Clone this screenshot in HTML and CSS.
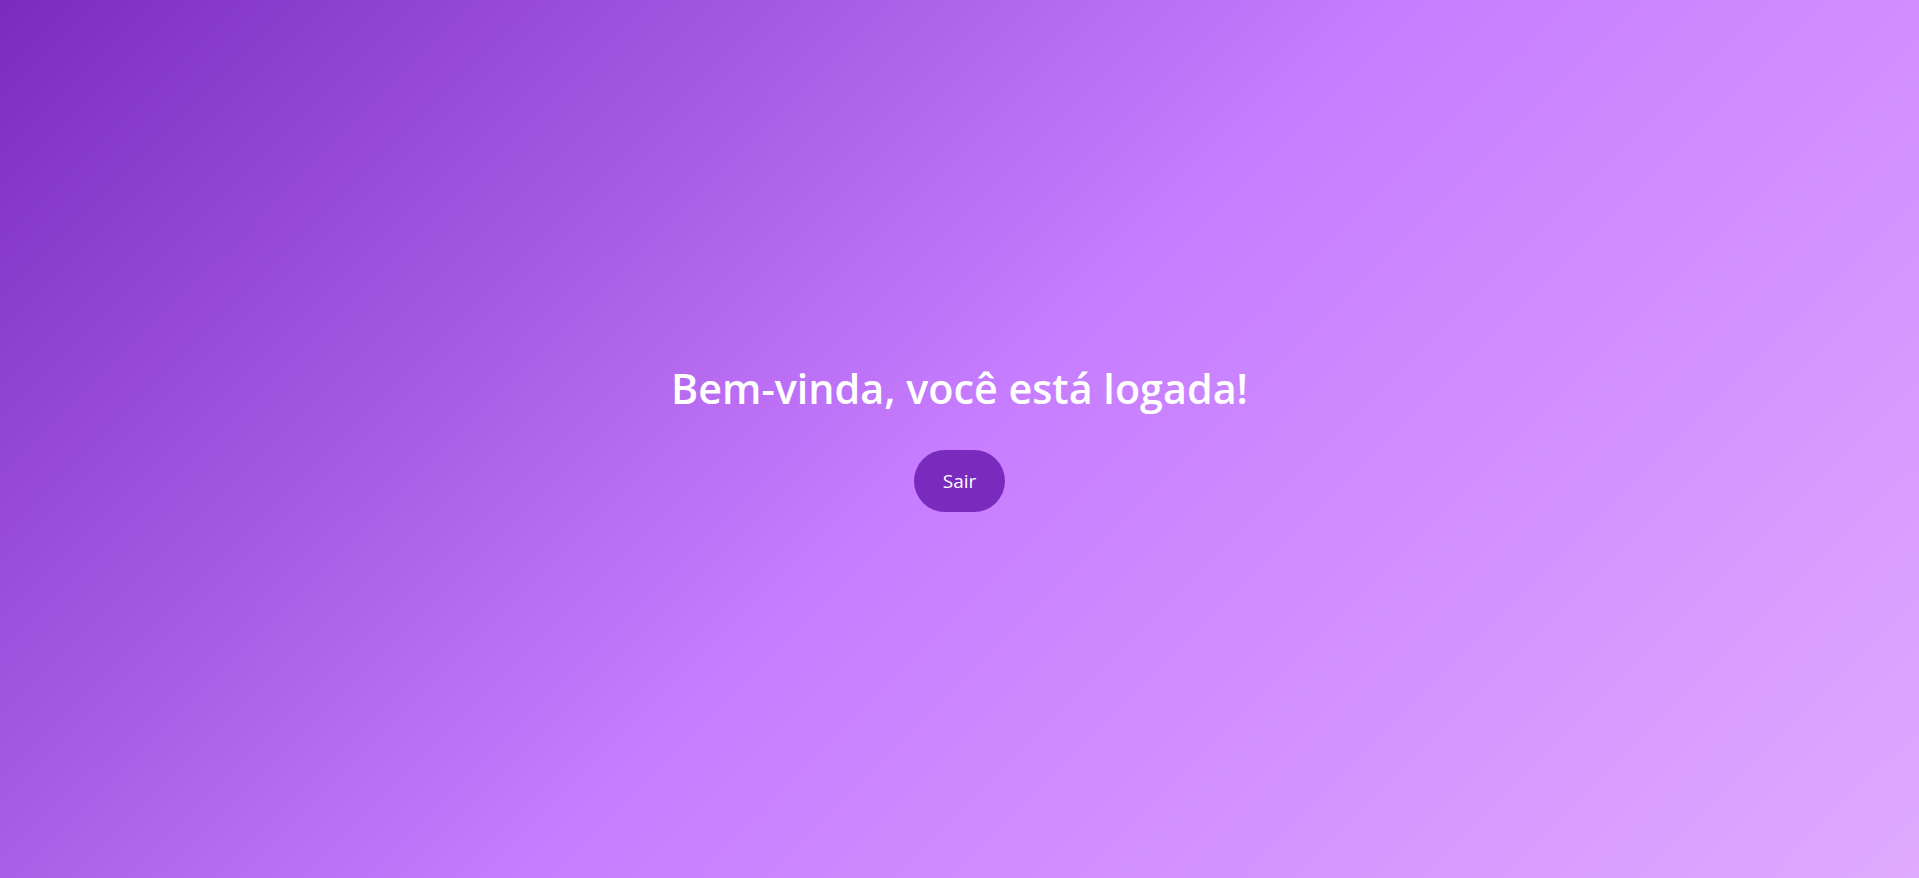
FILE: index.html
```html
<!DOCTYPE html>
<html lang="pt-BR">
<head>
<meta charset="utf-8">
<title>Bem-vinda</title>
<link rel="stylesheet" href="styles.css">
</head>
<body>
<main class="welcome">
  <h1 class="welcome-title">Bem-vinda, você está logada!</h1>
  <button class="logout-btn" type="button">Sair</button>
</main>
</body>
</html>
```
FILE: styles.css
```css
html, body {
  margin: 0;
  padding: 0;
  height: 100%;
}
body {
  background: linear-gradient(135deg, #7b2cbf 0%, #c77dff 50%, #e0aaff 100%);
  font-family: "Open Sans", "Noto Sans", sans-serif;
}
.welcome {
  min-height: 100vh;
  display: flex;
  flex-direction: column;
  align-items: center;
  justify-content: center;
  box-sizing: border-box;
  padding-bottom: 6px;
}
.welcome-title {
  margin: 0 0 34px;
  color: #ffffff;
  font-size: 41.3px;
  font-weight: 600;
  line-height: 56px;
}
.logout-btn {
  font-family: inherit;
  font-size: 19px;
  color: #ffffff;
  background: #7a2bbd;
  border: none;
  border-radius: 31px;
  height: 62px;
  padding: 0 29px;
  cursor: pointer;
}
```
